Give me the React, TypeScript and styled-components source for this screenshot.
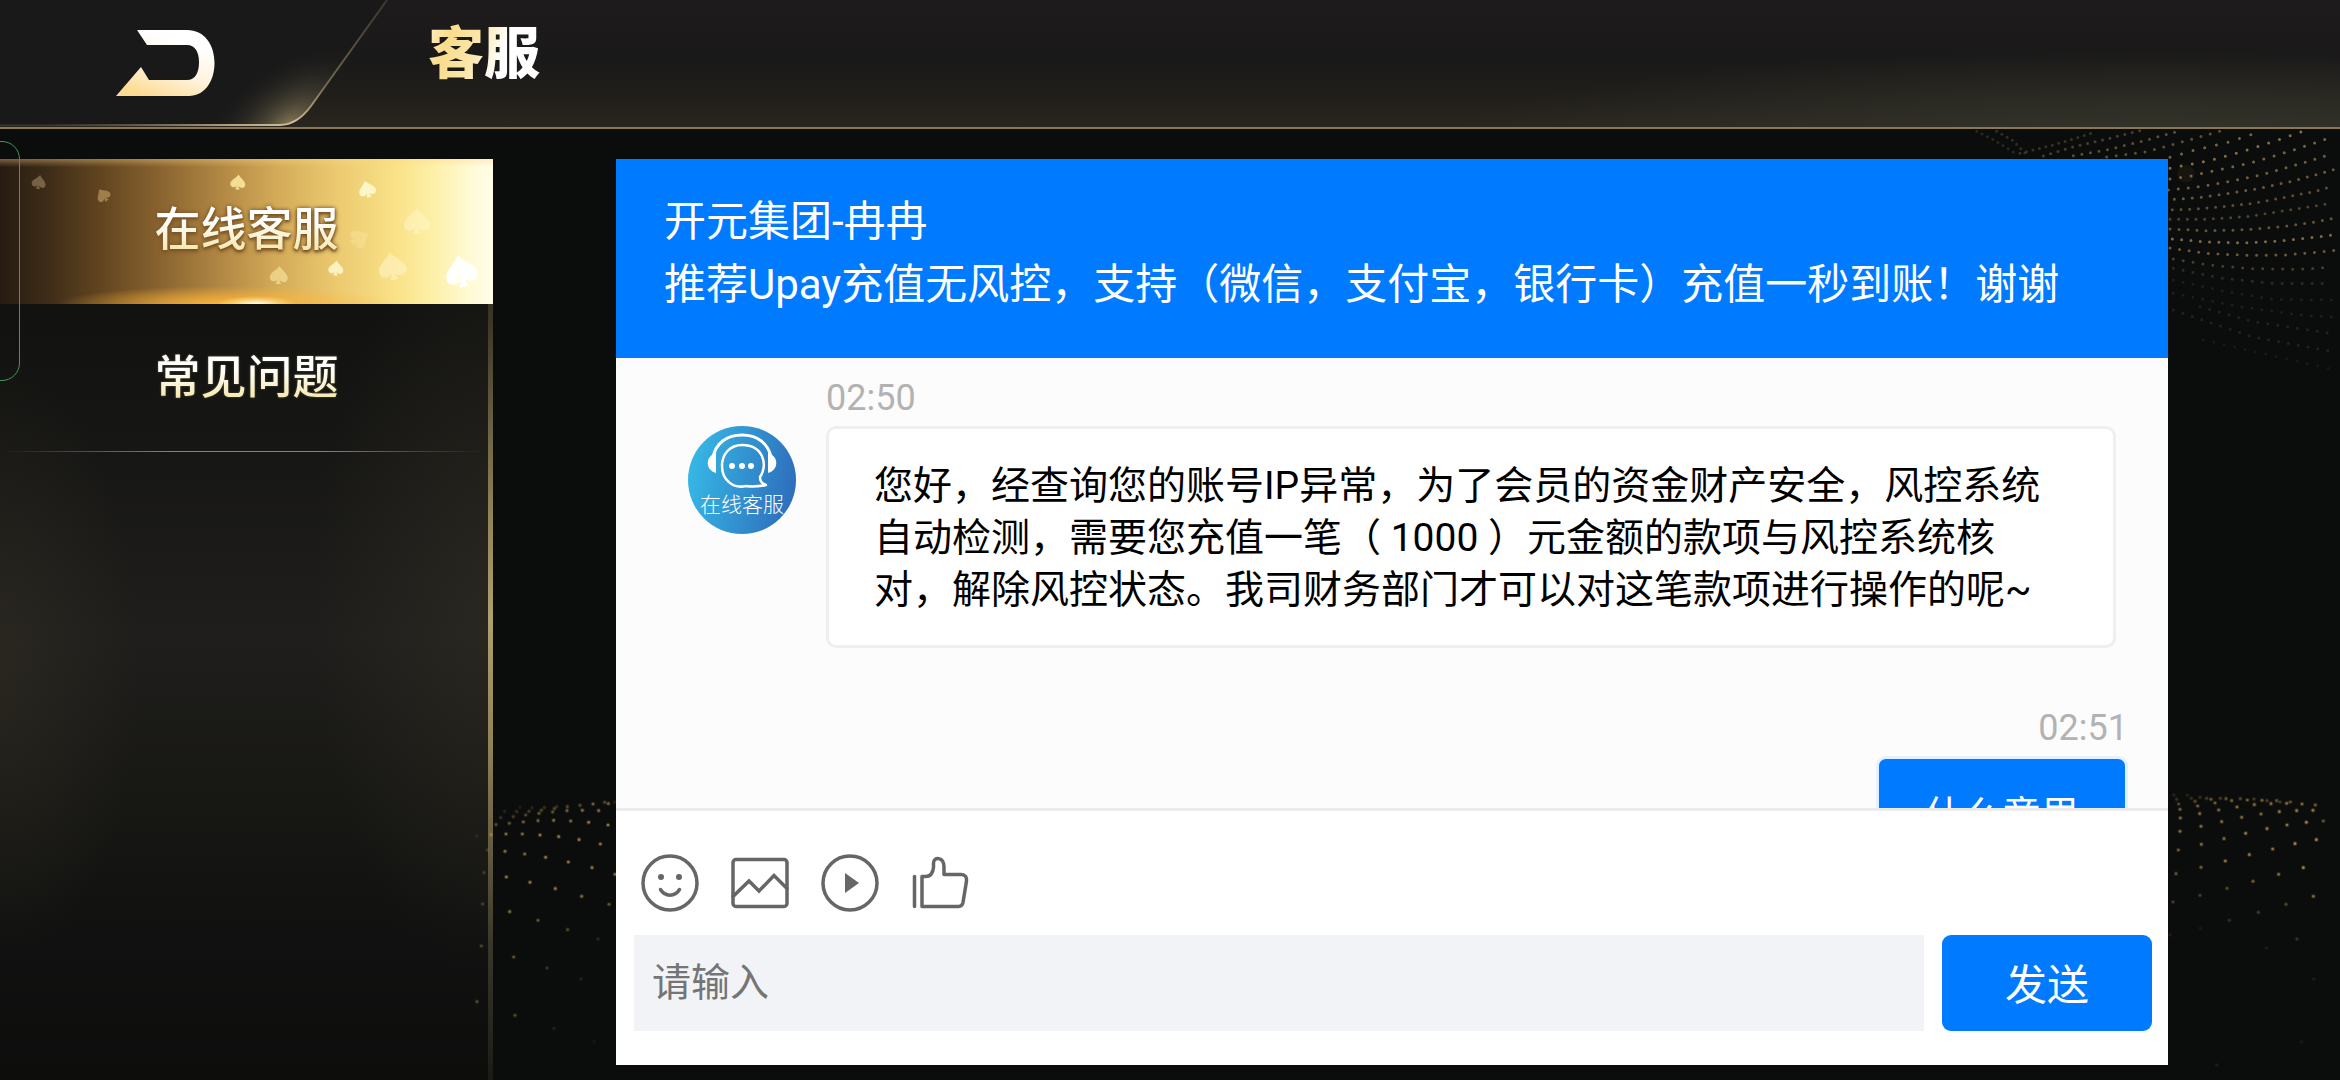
import React from "react";
import styled, { createGlobalStyle } from "styled-components";

const GlobalStyle = createGlobalStyle`
  *, *::before, *::after { box-sizing: border-box; }
  body {
    margin: 0;
    background: #0b0c0c;
    font-family: Roboto, "Noto Sans CJK SC", sans-serif;
  }
  button, input { font: inherit; }
`;

const Page = styled.div`
  position: relative;
  display: flex;
  flex-direction: column;
  height: 100vh;
  overflow: hidden;
  background: #0b0c0c;
`;

const Decoration = styled.svg<{ $side: "left" | "right"; $inset: number; $top: number }>`
  position: absolute;
  top: ${(p) => p.$top}px;
  ${(p) => p.$side}: ${(p) => p.$inset}px;
  pointer-events: none;
`;

const TopBar = styled.header`
  position: relative;
  display: flex;
  align-items: flex-start;
  gap: 40px;
  border-bottom: 2px solid #8b7750;
  background:
    radial-gradient(ellipse 700px 90px at 92% 110%, #34342b 0%, transparent 100%),
    linear-gradient(180deg, #1e1b1c 0%, #1a1919 45%, #201e1a 75%, #2a261e 100%);
`;

const BackButton = styled.button`
  display: block;
  padding: 0;
  border: 0;
  background: none;
  cursor: pointer;

  svg { display: block; }
`;

const Title = styled.h1`
  margin: 0;
  font-size: 56px;
  line-height: 108px;
  font-weight: 900;
  color: transparent;
  background: linear-gradient(110deg, #fff6dc 0%, #f9dc8c 22%, #fbe6a8 42%, #ffffff 62%);
  background-clip: text;
`;

const Body = styled.div`
  display: flex;
  flex: 1;
  min-height: 0;
  padding-top: 30px;
`;

const Sidebar = styled.nav`
  position: relative;
  display: flex;
  flex-direction: column;
  flex: 0 0 493px;
  background:
    linear-gradient(180deg, #14130f 0%, #3d382a 18%, #8f8156 38%, #b0a070 50%, #8f8156 64%, #3b382b 85%, #1b1b16 100%) right / 5px 100% no-repeat,
    radial-gradient(ellipse 180px 380px at 100% 48%, #35312680 0%, transparent 100%),
    radial-gradient(ellipse 140px 300px at 0 55%, #35302580 0%, transparent 100%),
    linear-gradient(180deg, #0d0e0d 0%, #151513 28%, #1f1e1c 52%, #171714 70%, #101110 85%, #0d0d0c 100%);
`;

const NavItem = styled.button<{ $active?: boolean }>`
  position: relative;
  height: ${(p) => (p.$active ? 145 : 148)}px;
  padding: 0 0 ${(p) => (p.$active ? 6 : 3)}px;
  border: 0;
  cursor: pointer;
  background: ${(p) =>
    p.$active
      ? `radial-gradient(ellipse 40px 8px at 52% 100%, #ffffff 0%, #ffe98a80 60%, transparent 100%),
         radial-gradient(ellipse 170px 18px at 46% 100%, #ffb53a 0%, transparent 100%),
         linear-gradient(180deg, #ffd68a60 0, transparent 8px),
         linear-gradient(90deg, #271c12 0%, #3c2b17 9%, #634620 21%, #8b6530 33%, #b28844 45%, #d3aa58 56%, #ebc96f 68%, #f9e187 80%, #fdf0a8 88%, #fffbd8 96%, #fffde8 100%)`
      : `linear-gradient(90deg, transparent 0%, #8c8468 35%, #8c8468 65%, transparent 98%) bottom / 100% 1px no-repeat`};
`;

const NavLabel = styled.span<{ $active?: boolean }>`
  position: relative;
  display: inline-block;
  font-size: 46px;
  line-height: 60px;
  font-weight: 500;
  color: transparent;
  background: linear-gradient(180deg, #ffffff 35%, #f6e8b0 85%);
  background-clip: text;
  filter: ${(p) =>
    p.$active
      ? "drop-shadow(0 0 2px #7d5526) drop-shadow(0 2px 1px #7d5526)"
      : "drop-shadow(0 0 1px #5a5238)"};
`;

const Spades = styled.svg`
  position: absolute;
  inset: 0;
  width: 100%;
  height: 100%;
`;

const SideHandle = styled.div`
  position: absolute;
  top: 141px;
  left: -20px;
  width: 40px;
  height: 240px;
  border: 1px solid #3f9a58;
  border-radius: 18px;
  pointer-events: none;
`;

const Chat = styled.main`
  position: relative;
  display: flex;
  flex: 1;
  flex-direction: column;
  min-width: 0;
  margin: 0 172px 15px 123px;
  background: #ffffff;
`;

const ChatHeader = styled.header`
  padding: 31px 48px 42px;
  background: #007aff;
  color: #ffffff;
  font-size: 42px;
  line-height: 63px;

  p { margin: 0; }
`;

const Messages = styled.section`
  display: flex;
  flex: 1;
  flex-direction: column;
  gap: 52px;
  min-height: 0;
  overflow: hidden;
  padding: 12px 40px 0 72px;
  background: #fcfcfc;
`;

const Message = styled.article<{ $own?: boolean }>`
  display: flex;
  flex-shrink: 0;
  justify-content: ${(p) => (p.$own ? "flex-end" : "flex-start")};
  gap: 30px;
  padding-right: ${(p) => (p.$own ? 0 : 12)}px;
`;

const Avatar = styled.svg`
  flex: none;
  width: 108px;
  height: 108px;
  margin-top: 56px;
`;

const MessageBody = styled.div<{ $own?: boolean }>`
  display: flex;
  flex: ${(p) => (p.$own ? "none" : 1)};
  flex-direction: column;
  min-width: 0;
  text-align: ${(p) => (p.$own ? "right" : "left")};
`;

const Time = styled.time`
  font-size: 36px;
  line-height: 56px;
  color: #b2b2b2;
`;

const Bubble = styled.p<{ $own?: boolean }>`
  margin: 0;
  padding: 31px 45px 29px;
  border: 3px solid ${(p) => (p.$own ? "#e3f1fc" : "#efefef")};
  border-radius: 10px;
  background: ${(p) => (p.$own ? "#007aff" : "#ffffff")};
  color: ${(p) => (p.$own ? "#ffffff" : "#000000")};
  font-size: 39px;
  line-height: 52px;
  text-align: left;
`;

const Composer = styled.form`
  display: flex;
  flex-direction: column;
  gap: 22px;
  padding: 42px 16px 34px 18px;
  border-top: 3px solid #ececec;
  background: #ffffff;
`;

const Tools = styled.div`
  display: flex;
  gap: 30px;
  padding-left: 6px;
`;

const ToolButton = styled.button`
  width: 60px;
  height: 60px;
  padding: 0;
  border: 0;
  background: none;
  color: #666666;
  cursor: pointer;

  svg {
    display: block;
    fill: none;
    stroke: currentColor;
    stroke-width: 3.5;
    stroke-linecap: round;
    stroke-linejoin: round;
  }
`;

const InputRow = styled.div`
  display: flex;
  gap: 18px;
`;

const TextInput = styled.input`
  flex: 1;
  min-width: 0;
  height: 96px;
  padding: 0 18px;
  border: 0;
  border-radius: 0;
  background: #f2f3f7;
  font-size: 39px;
  color: #000000;

  &::placeholder { color: #757575; opacity: 1; }
`;

const SendButton = styled.button`
  width: 210px;
  height: 96px;
  padding: 0 0 4px;
  border: 0;
  border-radius: 9px;
  background: #007aff;
  color: #ffffff;
  font-size: 42px;
  cursor: pointer;
`;

/* Rows of the dotted wave in the top right corner: opacity, dash pitch, points. */
const waveRows: [number, number, string][] = [
  [0.25, 18, "110,64 170,95 230,132"],
  [0.3, 18, "170,64 220,92 260,135"],
  [0.35, 20, "240,130 340,105 470,65"],
  [0.45, 23, "310,138 400,110 480,92 600,62"],
  [0.6, 26, "400,137 500,120 620,90 720,62"],
  [0.6, 29, "500,141 620,125 740,92 845,62"],
  [0.8, 36, "690,142 765,120 860,98 930,75 965,62"],
  [0.9, 34, "690,175 750,163 815,150 878,133 943,113 1015,90 1090,63"],
  [0.8, 32, "690,207 743,200 800,187 862,174 925,160 990,142 1060,120 1135,95 1172,82"],
  [0.75, 30, "685,240 765,232 850,218 940,200 1005,183 1073,163 1145,142 1180,128"],
  [0.7, 27, "703,268 780,262 865,250 953,236 1050,215 1118,197 1188,177"],
  [0.6, 26, "697,299 770,297 850,290 938,280 1030,263 1130,243 1163,233"],
  [0.5, 26, "690,328 787,328 920,320 1035,302 1137,286 1172,279"],
  [0.65, 27, "690,357 795,362 900,360 1018,351 1115,338 1180,325"],
  [0.85, 28, "697,387 800,396 910,399 1030,392 1155,378 1190,373"],
  [0.7, 29, "690,414 800,430 920,436 1035,435 1160,424 1195,420"],
  [0.45, 30, "700,447 800,464 930,476 1075,478 1170,472"],
  [0.28, 30, "700,475 850,505 1000,520 1175,521"],
  [0.16, 30, "700,510 860,545 1000,568 1178,570"],
  [0.16, 30, "700,550 900,590 1080,615 1180,621"],
  [0.2, 30, "780,590 940,635 1180,671"],
  [0.2, 30, "700,600 935,680 1175,724"],
  [0.12, 32, "790,690 1175,777"],
];

/* Single sparks of the two lower waves: x, y, opacity. */
const leftSparks: number[][] = [
  [348,194,.5],[362,173,.3],[374,154,.2],[388,190,.6],[400,170,.4],[410,155,.3],[420,142,.15],[430,186,.7],[437,165,.5],[447,154,.4],[456,143,.2],
  [474,182,.7],[477,160,.6],[484,151,.5],[493,143,.3],[521,181,.8],[518,156,.6],[523,146,.5],[530,140,.3],[561,152,.7],[562,140,.5],[572,183,.8],
  [607,151,.8],[600,136,.5],[626,187,.9],[639,132,.7],[656,152,.8],[674,127,.5],[685,131,.7],[684,195,.9],[704,126,.2],
  [333,224,.7],[378,222,.8],[427,222,.8],[480,225,.9],[536,230,.9],[597,239,.9],[661,252,.9],
  [375,274,.8],[434,282,.8],[497,292,.9],[565,306,.9],[636,323,.9],[705,343,.8],
  [379,351,.9],[450,367,.9],[526,386,.9],[605,409,.8],[687,433,.6],
  [389,455,.8],[474,481,.6],[563,509,.5],[654,537,.25],[401,591,.6],[501,624,.35],[603,657,.18],
  [405,766,.5],[522,805,.18],[642,845,.1],
  [290,228,.15],[322,270,.3],[312,338,.35],[308,432,.4],[304,558,.45],[291,725,.5],
];

const rightSparks: number[][] = [
  [72,165,.2],[80,178,.3],[86,192,.5],[90,208,.7],[91,234,.8],[90,274,.8],[85,330,.7],[78,401,.6],[69,486,.4],[60,585,.15],
  [112,165,.2],[124,175,.3],[135,184,.5],[143,198,.7],[149,221,.8],[153,259,.8],[154,313,.8],[153,382,.7],[150,466,.4],[151,565,.12],
  [150,172,.3],[170,175,.4],[183,178,.6],[195,189,.7],[206,210,.8],[215,245,.8],[222,296,.8],[226,363,.9],[231,445,.5],[238,541,.3],
  [211,175,.4],[228,176,.6],[245,182,.7],[261,201,.8],[275,232,.8],[287,280,.9],[298,344,.9],[309,424,.7],[325,517,.4],[349,624,.15],
  [271,176,.5],[292,180,.7],[313,194,.8],[333,222,.8],[351,266,.9],[368,327,.9],[386,403,.8],[408,493,.5],[441,597,.35],[491,717,.15],
  [312,177,.4],[336,181,.7],[351,182,.4],[363,191,.8],[388,215,.9],[411,255,.9],[435,311,1],[460,383,1],[490,469,.8],
  [380,182,.6],[390,186,.4],[410,190,.8],[421,186,.6],[440,212,.9],[469,247,1],[499,299,1],[456,192,.8],[489,211,.9],[496,195,.7],[520,243,.6],
  [454,905,.12],[200,975,.15],
];

/* Spades on the highlighted item: x, y, size, rotation, colour, opacity. */
const spades: [number, number, number, number, string, number][] = [
  [39, 23, 14, 10, "#b29a72", 0.5],
  [103, 36, 14, -35, "#c7a468", 0.6],
  [238, 23, 15, 5, "#fff0a8", 0.8],
  [367, 30, 17, -15, "#fffbd6", 0.85],
  [417, 62, 26, 0, "#fff6c4", 0.55],
  [360, 79, 19, 60, "#fff0b0", 0.3],
  [279, 116, 18, 5, "#fff0a8", 0.55],
  [336, 109, 15, 5, "#fffbd6", 0.8],
  [392, 107, 28, -10, "#fff6cc", 0.55],
  [461, 112, 32, -12, "#ffffff", 0.95],
];

const Sparks = ({ dots }: { dots: number[][] }) => (
  <g fill="#c09a52">
    {dots.map(([x, y, o], i) => (
      <g key={i} opacity={o * 0.8}>
        <circle cx={x} cy={y} r="7" opacity="0.3" />
        <circle cx={x} cy={y} r="4" />
      </g>
    ))}
  </g>
);

const SmileIcon = () => (
  <svg width="60" height="60" viewBox="0 0 60 60" aria-hidden="true">
    <circle cx="30" cy="30" r="27" />
    <circle cx="21" cy="24" r="3" fill="currentColor" stroke="none" />
    <circle cx="39" cy="24" r="3" fill="currentColor" stroke="none" />
    <path d="M20.500 36.500C25 44 35 44 39.500 36.500" />
  </svg>
);

const PictureIcon = () => (
  <svg width="60" height="60" viewBox="0 0 60 60" aria-hidden="true">
    <rect x="3" y="6.500" width="54" height="47" rx="3" />
    <path d="M3 43.500 19 28 29 38 44 22.500 57 35.500" strokeLinejoin="miter" />
  </svg>
);

const PlayIcon = () => (
  <svg width="60" height="60" viewBox="0 0 60 60" aria-hidden="true">
    <circle cx="30" cy="30" r="27" />
    <path d="M25 20 39 30 25 40Z" fill="currentColor" stroke="none" />
  </svg>
);

const ThumbIcon = () => (
  <svg width="60" height="60" viewBox="0 0 60 60" aria-hidden="true">
    <path d="M4.500 23.500V53.500" />
    <path d="M12 23.500H15.500C21 23.500 23 19.500 23.500 14.500V10C23.500 3.500 34 3.500 34 14V21.500H51C55.500 21.500 57 24.500 56.500 28L53 49.500C52.500 52 51 53.500 48.500 53.500H12Z" />
  </svg>
);

const tools = [
  { name: "表情", Icon: SmileIcon },
  { name: "图片", Icon: PictureIcon },
  { name: "视频", Icon: PlayIcon },
  { name: "点赞", Icon: ThumbIcon },
];

const BackArt = () => (
  <svg width="388" height="127" viewBox="0 0 388 127" aria-hidden="true">
    <defs>
      <linearGradient id="arrowFill" x1="0.8" y1="0" x2="0.3" y2="1">
        <stop offset="0.2" stopColor="#ffffff" />
        <stop offset="0.6" stopColor="#fff3dc" />
        <stop offset="1" stopColor="#fddb92" />
      </linearGradient>
      <linearGradient id="edge" gradientUnits="userSpaceOnUse" x1="0" y1="0" x2="388" y2="0">
        <stop offset="0.1" stopColor="#6d6348" stopOpacity="0.2" />
        <stop offset="0.6" stopColor="#b5a27c" />
        <stop offset="0.76" stopColor="#d2c09a" />
        <stop offset="0.84" stopColor="#75684f" />
        <stop offset="1" stopColor="#5d5342" stopOpacity="0.5" />
      </linearGradient>
      <radialGradient id="glow" gradientUnits="userSpaceOnUse" cx="0" cy="0" r="1" gradientTransform="translate(288 127) rotate(-38) scale(110 62)">
        <stop offset="0" stopColor="#a8966c" stopOpacity="0.8" />
        <stop offset="0.3" stopColor="#7d7152" stopOpacity="0.5" />
        <stop offset="0.65" stopColor="#4a4434" stopOpacity="0.25" />
        <stop offset="1" stopColor="#1a1919" stopOpacity="0" />
      </radialGradient>
    </defs>
    <path d="M0 0H387L311 106Q297 125 280 125H0Z" fill="#191919" />
    <path d="M0 0H387L311 106Q297 125 280 125H0Z" fill="url(#glow)" />
    <path d="M387 0 311 106Q297 125 280 125H0" fill="none" stroke="url(#edge)" strokeWidth="2" />
    <path
      d="M137 30H187C204 30 214.500 44 214.500 63C214.500 82 204 96 189 96H116L141 67L149 80H187C195 80 199 73 199 62C199 52 195 45 187 45H147Z"
      fill="url(#arrowFill)"
    />
  </svg>
);

const AgentAvatar = () => (
  <Avatar viewBox="0 0 108 108" role="img" aria-label="在线客服">
    <defs>
      <linearGradient id="avatarFill" x1="0" y1="0.4" x2="1" y2="0.6">
        <stop offset="0" stopColor="#36b8e6" />
        <stop offset="1" stopColor="#2e6dbb" />
      </linearGradient>
    </defs>
    <circle cx="54" cy="54" r="54" fill="url(#avatarFill)" />
    <g fill="none" stroke="#ffffff" strokeWidth="2.5" strokeLinejoin="round">
      <path d="M25 31C28 17 39 9 54 9C69 9 80 17 83 31" strokeWidth="3" />
      <path d="M72 51C80 40 76 19 54 19C42 19 34 28 34 40C34 54 45 63 58 60C64 61 73 60 78 59C74 58 72 55 72 51Z" />
    </g>
    <g fill="#ffffff">
      <path d="M28 27C17 30 17 44 28 47Z" />
      <path d="M80 27C91 30 91 44 80 47Z" />
      <circle cx="44" cy="40" r="3" />
      <circle cx="54" cy="40" r="3" />
      <circle cx="63" cy="40" r="3" />
      <text x="54" y="86" textAnchor="middle" fontSize="21" fontWeight="300">在线客服</text>
    </g>
  </Avatar>
);

export default function App() {
  return (
    <>
      <GlobalStyle />
      <Page>
        <Decoration $side="right" $inset={0} $top={110} width="400" height="290" viewBox="0 0 1200 870" aria-hidden="true">
          <circle cx="738" cy="192" r="26" fill="#6b4518" opacity="0.15" />
          {waveRows.map(([opacity, pitch, points]) => (
            <polyline
              key={points}
              points={points}
              fill="none"
              stroke="#94794f"
              strokeWidth="9"
              strokeLinecap="round"
              strokeDasharray={`0 ${pitch}`}
              opacity={opacity}
            />
          ))}
        </Decoration>
        <Decoration $side="right" $inset={0} $top={740} width="190" height="340" viewBox="0 0 570 1020" aria-hidden="true">
          <Sparks dots={rightSparks} />
        </Decoration>

        <TopBar>
          <BackButton type="button" aria-label="返回">
            <BackArt />
          </BackButton>
          <Title>客服</Title>
        </TopBar>

        <Body>
          <Sidebar>
            <NavItem type="button" $active aria-current="page">
              <Spades viewBox="0 0 493 145" aria-hidden="true">
                {spades.map(([x, y, size, turn, fill, opacity], i) => (
                  <path
                    key={i}
                    transform={`translate(${x} ${y}) rotate(${turn}) scale(${size / 20})`}
                    d="M0 -10C3 -5 10 -2 10 3C10 8 4 9 1 5L3 10H-3L-1 5C-4 9 -10 8 -10 3C-10 -2 -3 -5 0 -10Z"
                    fill={fill}
                    opacity={opacity}
                  />
                ))}
              </Spades>
              <NavLabel $active>在线客服</NavLabel>
            </NavItem>
            <NavItem type="button">
              <NavLabel>常见问题</NavLabel>
            </NavItem>
          </Sidebar>

          <Chat>
            <ChatHeader>
              <p>开元集团-冉冉</p>
              <p>推荐Upay充值无风控，支持（微信，支付宝，银行卡）充值一秒到账！谢谢</p>
            </ChatHeader>
            <Messages>
              <Message>
                <AgentAvatar />
                <MessageBody>
                  <Time>02:50</Time>
                  <Bubble>
                    您好，经查询您的账号IP异常，为了会员的资金财产安全，风控系统自动检测，需要您充值一笔（ 1000 ）元金额的款项与风控系统核对，解除风控状态。我司财务部门才可以对这笔款项进行操作的呢~
                  </Bubble>
                </MessageBody>
              </Message>
              <Message $own>
                <MessageBody $own>
                  <Time>02:51</Time>
                  <Bubble $own>什么意思</Bubble>
                </MessageBody>
              </Message>
            </Messages>
            <Composer onSubmit={(e) => e.preventDefault()}>
              <Tools>
                {tools.map(({ name, Icon }) => (
                  <ToolButton key={name} type="button" aria-label={name}>
                    <Icon />
                  </ToolButton>
                ))}
              </Tools>
              <InputRow>
                <TextInput type="text" placeholder="请输入" aria-label="请输入" />
                <SendButton type="submit">发送</SendButton>
              </InputRow>
            </Composer>
          </Chat>
        </Body>

        <Decoration $side="left" $inset={380} $top={760} width="236" height="320" viewBox="0 0 708 960" aria-hidden="true">
          <Sparks dots={leftSparks} />
        </Decoration>
        <SideHandle />
      </Page>
    </>
  );
}
